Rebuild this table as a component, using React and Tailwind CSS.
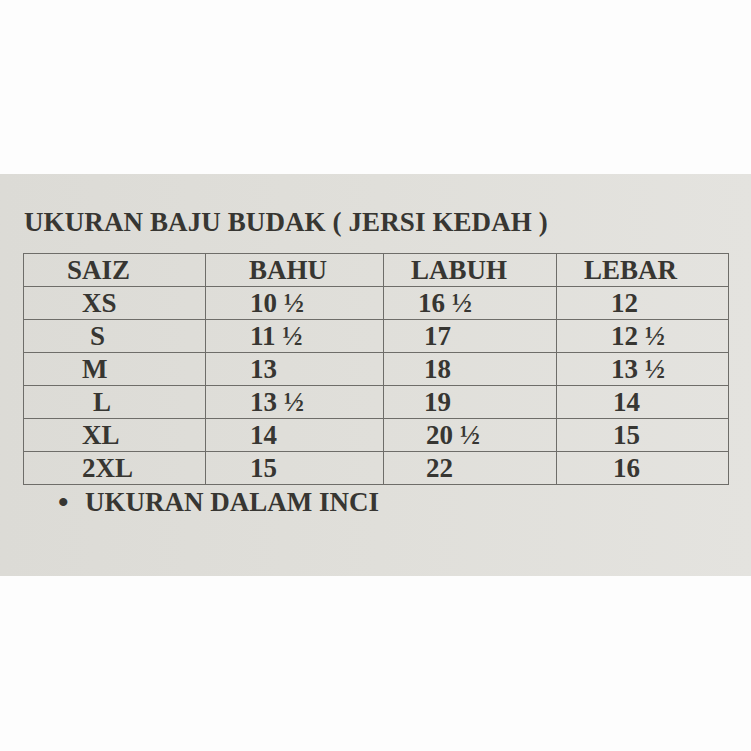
const columns = [
  { width: "w-[182px]" },
  { width: "w-[178px]" },
  { width: "w-[173px]" },
  { width: "w-[172px]" },
]

// each cell: [text, left padding class]
const header = [
  ["SAIZ", "pl-[43px]"],
  ["BAHU", "pl-[43px]"],
  ["LABUH", "pl-[27px]"],
  ["LEBAR", "pl-[27px]"],
]

const rows = [
  [["XS", "pl-[58px]"], ["10 ½", "pl-[44px]"], ["16 ½", "pl-[34px]"], ["12", "pl-[54px]"]],
  [["S", "pl-[66px]"], ["11 ½", "pl-[44px]"], ["17", "pl-[40px]"], ["12 ½", "pl-[54px]"]],
  [["M", "pl-[58px]"], ["13", "pl-[44px]"], ["18", "pl-[40px]"], ["13 ½", "pl-[54px]"]],
  [["L", "pl-[69px]"], ["13 ½", "pl-[44px]"], ["19", "pl-[40px]"], ["14", "pl-[56px]"]],
  [["XL", "pl-[58px]"], ["14", "pl-[44px]"], ["20 ½", "pl-[42px]"], ["15", "pl-[56px]"]],
  [["2XL", "pl-[58px]"], ["15", "pl-[44px]"], ["22", "pl-[42px]"], ["16", "pl-[56px]"]],
]

function Row({ cells }) {
  return (
    <div className="flex">
      {cells.map(([text, pad], i) => (
        <div
          key={i}
          className={`${columns[i].width} ${pad} flex h-[33px] items-center whitespace-pre border-b border-r border-[#6e6d69]`}
        >
          {text}
        </div>
      ))}
    </div>
  )
}

export default function App() {
  return (
    <div className="flex min-h-[751px] w-[751px] flex-col bg-[#fdfdfd]">
      <div className="h-[174px]" />
      <div
        className="flex h-[402px] flex-col bg-linear-to-r from-[#dcdbd6] via-[#e0dfda] to-[#e4e3df] pl-[23px] pt-[32px] text-[27px] font-bold leading-[32px] text-[#373632]"
        style={{ fontFamily: '"Liberation Serif", "Times New Roman", serif' }}
      >
        <h1 className="pl-[1px] tracking-[0.1px]">UKURAN BAJU BUDAK ( JERSI KEDAH )</h1>

        <div className="mt-[15px] flex w-fit flex-col border-l border-t border-[#6e6d69]">
          <Row cells={header} />
          {rows.map((cells, i) => (
            <Row key={i} cells={cells} />
          ))}
        </div>

        <div className="mt-[1px] flex items-center pl-[35px]">
          <span className="w-[27px] text-[30px]">•</span>
          <span>UKURAN DALAM INCI</span>
        </div>
      </div>
      <div className="flex-1" />
    </div>
  )
}
